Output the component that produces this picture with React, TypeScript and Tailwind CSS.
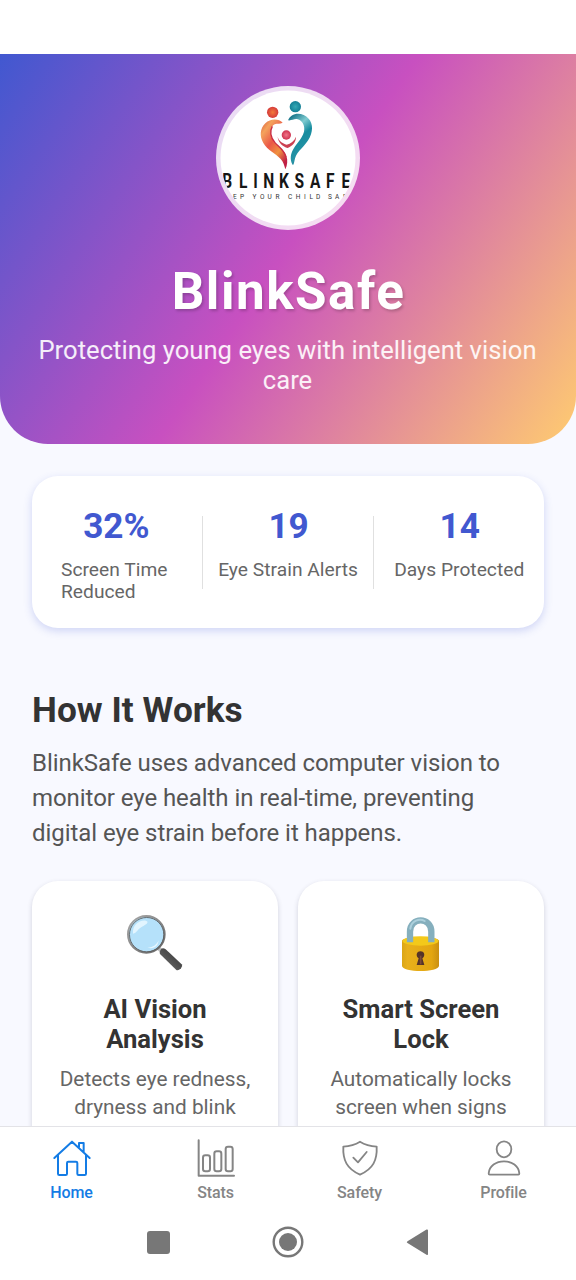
import type { ReactNode } from "react";

function Logo() {
  return (
    <svg viewBox="0 0 144 144" className="block h-36 w-36">
      <defs>
        <clipPath id="disc"><circle cx="72" cy="72" r="67.5" /></clipPath>
        <linearGradient id="warm" x1="0" y1="0" x2="0.7" y2="1">
          <stop offset="0" stopColor="#d9533c" />
          <stop offset="0.22" stopColor="#f4a35c" />
          <stop offset="0.5" stopColor="#ea5647" />
          <stop offset="0.75" stopColor="#f0923f" />
          <stop offset="1" stopColor="#c01f45" />
        </linearGradient>
        <linearGradient id="cool" x1="0.2" y1="0" x2="0.6" y2="1">
          <stop offset="0" stopColor="#116f85" />
          <stop offset="0.28" stopColor="#7fcbd0" />
          <stop offset="0.5" stopColor="#168c9f" />
          <stop offset="0.8" stopColor="#2793a5" />
          <stop offset="1" stopColor="#0e6f8b" />
        </linearGradient>
        <radialGradient id="redHead"><stop offset="0" stopColor="#f27a3a" /><stop offset="1" stopColor="#d53b3b" /></radialGradient>
        <radialGradient id="tealHead"><stop offset="0" stopColor="#35a9b5" /><stop offset="1" stopColor="#147f95" /></radialGradient>
        <radialGradient id="kidHead"><stop offset="0" stopColor="#f0788a" /><stop offset="1" stopColor="#cf3350" /></radialGradient>
      </defs>
      <circle cx="72" cy="72" r="72" fill="#fff" fillOpacity="0.8" />
      <circle cx="72" cy="72" r="67.5" fill="#fff" />
      <g transform="translate(-16 -10) scale(0.33333)">
        <circle cx="218" cy="109" r="17" fill="url(#redHead)" />
        <circle cx="286" cy="92" r="17" fill="url(#tealHead)" />
        <circle cx="259" cy="177" r="14" fill="url(#kidHead)" />
        <path d="M248 140C236 128 212 127 196 142C180 157 178 181 190 201C202 222 226 232 242 249C250 258 253 268 256 280C262 268 264 252 259 239C252 221 233 211 221 195C207 175 211 151 224 145C232 141 240 145 248 140Z" fill="url(#warm)" />
        <path d="M217 151C209 165 212 184 225 200C238 214 254 223 258 244" fill="none" stroke="#c92b43" strokeWidth="4" />
        <path d="M264 133C271 115 292 108 311 117C334 128 341 151 333 175C325 202 298 220 288 239C283 249 284 260 279 268C271 257 270 240 277 225C286 205 306 190 312 167C316 149 306 133 293 130C283 127 275 135 264 133Z" fill="url(#cool)" />
        <path d="M233 182C236 195 248 202 260 206C272 203 283 195 288 182C288 200 276 210 263 216C249 212 234 200 233 182Z" fill="#cb4152" />
      </g>
      <g clipPath="url(#disc)" className="font-['Roboto']">
        <g transform="scale(0.74 1)">
          <text x="8.500 31 50.5 64 85 106 127 148.5 169.5" y="102" fontSize="21" fontWeight="700" fill="#161616">BLINKSAFE</text>
        </g>
        <text x="1 9 17 24 30 36.5 44 51.5 59.5 67 72 79.8 88 93.5 100 107 112 119 127 134" y="112.6" fontSize="6.5" fill="#333">KEEP YOUR CHILD SAFE</text>
      </g>
    </svg>
  );
}

function Magnifier() {
  return (
    <svg viewBox="315 128 180 180" className="h-[60px] w-[60px]">
      <defs>
        <linearGradient id="handle" x1="0" y1="1" x2="1" y2="0"><stop offset="0" stopColor="#777" /><stop offset="0.5" stopColor="#505050" /><stop offset="1" stopColor="#333" /></linearGradient>
        <linearGradient id="rim" x1="0" y1="0" x2="1" y2="1"><stop offset="0" stopColor="#aaa" /><stop offset="1" stopColor="#666" /></linearGradient>
      </defs>
      <path d="M411 229L424 241" stroke="#bdbdbd" strokeWidth="12" />
      <path d="M424 235Q430 231 437 237L485 282Q489 287 483 294Q475 302 469 299L420 251Q417 245 424 235Z" fill="url(#handle)" />
      <circle cx="379" cy="192" r="55" fill="#b5e1fa" stroke="url(#rim)" strokeWidth="6" />
      <circle cx="380" cy="193" r="51.5" fill="none" stroke="#555" strokeWidth="2.5" />
      <path d="M339 190C337 166 355 149 377 151C390 154 378 163 366 169C352 176 351 188 339 190Z" fill="#e2f5ff" />
      <path d="M382 232C400 232 411 222 416 210C414 229 401 237 382 232Z" fill="#e8f8ff" />
    </svg>
  );
}

function Padlock() {
  return (
    <svg viewBox="303 128 180 180" className="h-[60px] w-[60px]">
      <defs>
        <linearGradient id="gold"><stop offset="0" stopColor="#dba616" /><stop offset="0.15" stopColor="#e8b01b" /><stop offset="0.8" stopColor="#e3a611" /><stop offset="1" stopColor="#c98f12" /></linearGradient>
      </defs>
      <path d="M336 211C336 197 447 197 447 211V286C447 307 336 307 336 286Z" fill="url(#gold)" />
      <ellipse cx="391.500" cy="212" rx="54" ry="14" fill="#f3c91a" />
      <path d="M360 216V184C360 139 424 139 424 184V216" fill="none" stroke="#85afbd" strokeWidth="19" />
      <path d="M361 175C364 150 389 143 404 152" fill="none" stroke="#acd0dc" strokeWidth="6" strokeLinecap="round" />
      <path d="M391.500 243C378 243 377 259 386 264L380 284H403L397 264C406 259 405 243 391.500 243Z" fill="#553329" />
      <path d="M392 256V282" stroke="#7c4b3a" strokeWidth="5" />
    </svg>
  );
}

function Stat({ value, label, className }: { value: string; label: string; className: string }) {
  return (
    <div className={`flex flex-col items-center ${className}`}>
      <div className="mt-[29px] h-[42px] pl-px text-[35.2px] leading-[42px] font-bold text-[#4158d0]">{value}</div>
      <div className="mt-[12px] text-[19.2px] leading-[22.400px] tracking-[0.03px] text-[#666]">{label}</div>
    </div>
  );
}

function Feature({ icon, title, text }: { icon: ReactNode; title: ReactNode; text: ReactNode }) {
  return (
    <div className="flex h-[330px] flex-1 flex-col items-center rounded-[26px] bg-white pt-[32px] text-center shadow-[0_2px_5px_rgba(50,50,80,0.2)]">
      {icon}
      <h3 className="mt-[21px] text-[25.6px] leading-[30.500px] font-bold text-[#333]">{title}</h3>
      <p className="mt-[10px] text-[20.8px] leading-[28.800px] text-[#666]">{text}</p>
    </div>
  );
}

function Tab({ label, active, children }: { label: string; active?: boolean; children: ReactNode }) {
  return (
    <div className={`flex w-36 flex-col items-center ${active ? "text-[#147ce5]" : "text-[#858585]"}`}>
      {children}
      <span className="mt-[5px] pr-px text-[16px] leading-[20px] font-medium tracking-[-0.1px]">{label}</span>
    </div>
  );
}

const iconClass = "mt-[11px] h-[40px] w-[44px] fill-none stroke-current";

export default function App() {
  return (
    <div className="flex h-[1280px] w-[576px] flex-col overflow-hidden bg-white font-['Roboto',sans-serif]">
      <div className="h-[54px] shrink-0" />
      <main className="h-[1072px] shrink-0 overflow-hidden bg-[#f8f9ff]">
        <header className="flex h-[390px] flex-col items-center rounded-b-[48px] bg-[linear-gradient(124.1deg,#4158d0_0%,#c850c0_50%,#ffcc70_100%)] pt-[32px] text-center">
          <Logo />
          <h1 className="mt-[32px] pl-px text-[51.2px] leading-[60px] font-bold tracking-[1.500px] text-white [text-shadow:1.6px_1.6px_3px_rgba(0,0,0,0.2)]">BlinkSafe</h1>
          <p className="mt-[12.500px] pr-px text-[25.6px] leading-[30.400px] tracking-[0.03px] text-white/90">Protecting young eyes with intelligent vision<br />care</p>
        </header>
        <section className="mx-8 mt-8 flex h-[152px] rounded-[26px] bg-white shadow-[0_3px_9px_rgba(65,88,208,0.22)]">
          <Stat value="32%" label="Screen Time Reduced" className="ml-[29px] w-[110px]" />
          <div className="mt-10 ml-[31px] h-[73px] w-[1.600px] bg-[#e0e0e0]" />
          <Stat value="19" label="Eye Strain Alerts" className="w-[170px] whitespace-nowrap" />
          <div className="mt-10 h-[73px] w-[1.600px] bg-[#e0e0e0]" />
          <Stat value="14" label="Days Protected" className="w-[170px] whitespace-nowrap" />
        </section>
        <section className="mx-8 mt-[61px]">
          <h2 className="text-[35.2px] leading-[42px] font-bold tracking-[0.05px] text-[#333]">How It Works</h2>
          <p className="mt-[15px] text-[24px] leading-[35.200px] tracking-[-0.060px] text-[#555]">BlinkSafe uses advanced computer vision to<br />monitor eye health in real-time, preventing<br />digital eye strain before it happens.</p>
          <div className="mt-[29px] flex gap-5">
            <Feature icon={<Magnifier />} title={<>AI Vision<br />Analysis</>} text={<>Detects eye redness,<br />dryness and blink</>} />
            <Feature icon={<Padlock />} title={<>Smart Screen<br />Lock</>} text={<>Automatically locks<br />screen when signs</>} />
          </div>
        </section>
      </main>
      <nav className="flex h-[82px] shrink-0 border-t border-[#e3e3e7] bg-white">
        <Tab label="Home" active>
          <svg viewBox="150 52 132 120" className={iconClass} strokeWidth="6" strokeLinejoin="round" strokeLinecap="round">
            <path d="M163 112L216 63L269 112M174 103V159Q174 163 178 163H197Q201 163 201 159V127Q201 123 205 123H228Q232 123 232 127V159Q232 163 236 163H254Q258 163 258 159V103M237 80V67H251V94" />
          </svg>
        </Tab>
        <Tab label="Stats">
          <svg viewBox="582 52 132 120" className={iconClass} strokeWidth="6" strokeLinejoin="round" strokeLinecap="round">
            <path d="M596 59V165H702" />
            <rect x="609" y="104" width="21" height="48" rx="7" /><rect x="643" y="92" width="21" height="60" rx="7" /><rect x="677" y="78" width="21" height="74" rx="7" />
          </svg>
        </Tab>
        <Tab label="Safety">
          <svg viewBox="150 52 132 120" className={iconClass} strokeWidth="5.5" strokeLinejoin="round" strokeLinecap="round">
            <path d="M216 63Q195 76 166 78C164 119 177 145 216 162C255 145 268 119 266 78Q237 76 216 63Z" /><path d="M196 111L210 125L236 94" />
          </svg>
        </Tab>
        <Tab label="Profile">
          <svg viewBox="582 52 132 120" className={iconClass} strokeWidth="5.5" strokeLinejoin="round">
            <ellipse cx="648" cy="86" rx="22" ry="24" /><path d="M605 162Q602 162 602 158C604 136 624 122 648 122C672 122 692 136 694 158Q694 162 691 162Z" />
          </svg>
        </Tab>
      </nav>
      <div className="flex h-[72px] shrink-0 items-center justify-center">
        <svg viewBox="0 0 290 36" className="mt-[-5px] h-[36px] w-[290px]" fill="#777">
          <rect x="4" y="7" width="23" height="23" rx="3" />
          <circle cx="145" cy="18" r="14.300" fill="none" stroke="#777" strokeWidth="2.400" /><circle cx="145" cy="18" r="9" />
          <path d="M264.500 17.300L283.500 5.500Q285 5 285 6.500V30Q285 31.500 283.500 30.700L264.500 19Q263 18.200 264.500 17.300Z" />
        </svg>
      </div>
    </div>
  );
}
